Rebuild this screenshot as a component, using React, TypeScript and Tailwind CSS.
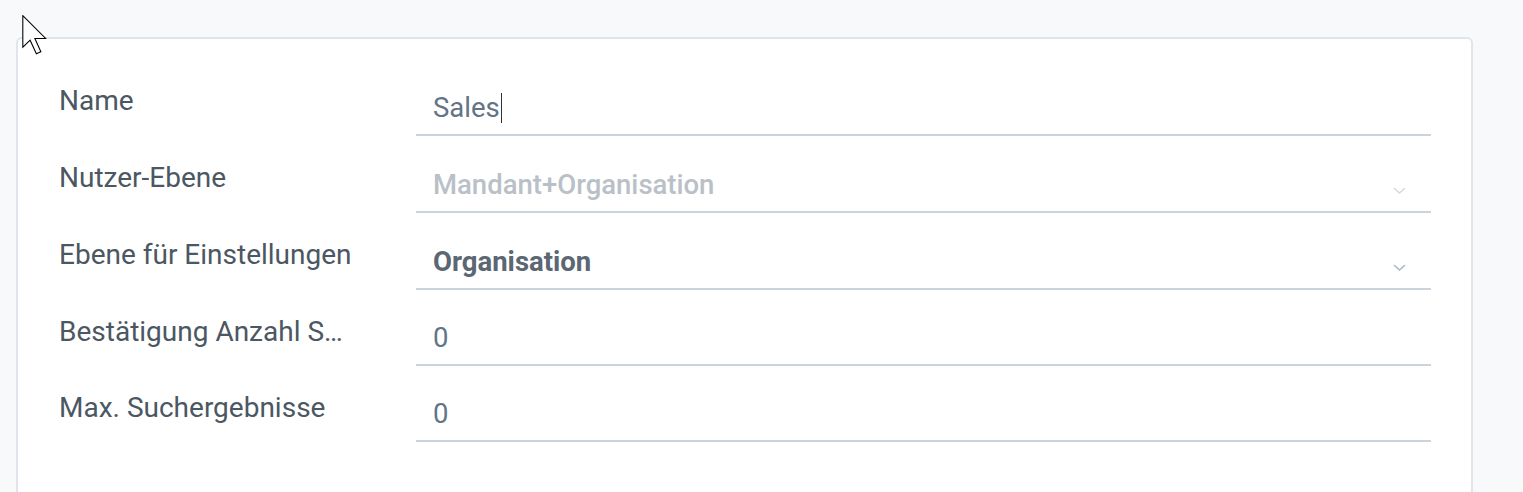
import React from 'react';

interface Field {
  label: string;
  value: string;
  kind: 'text' | 'disabled' | 'select';
  caret?: boolean;
  height: string;
}

const fields: Field[] = [
  { label: 'Name', value: 'Sales', kind: 'text', caret: true, height: 'h-[77px]' },
  { label: 'Nutzer-Ebene', value: 'Mandant+Organisation', kind: 'disabled', height: 'h-[77px]' },
  { label: 'Ebene für Einstellungen', value: 'Organisation', kind: 'select', height: 'h-[77px]' },
  { label: 'Bestätigung Anzahl Suchergebnisse', value: '0', kind: 'text', height: 'h-[76px]' },
  { label: 'Max. Suchergebnisse', value: '0', kind: 'text', height: 'h-[76px]' },
];

const Chevron: React.FC<{ light?: boolean }> = ({ light }) => (
  <svg width="13" height="8" viewBox="0 0 13 8" fill="none" className="shrink-0">
    <path
      d="M1.5 1.5 L6.5 6 L11.5 1.5"
      stroke={light ? '#d3dae0' : '#a9b7c3'}
      strokeWidth="1.6"
      strokeLinecap="round"
      strokeLinejoin="round"
    />
  </svg>
);

const Cursor: React.FC = () => (
  <svg
    width="27"
    height="40"
    viewBox="0 0 12.4 18.6"
    className="absolute left-[22px] top-[15px] pointer-events-none"
  >
    <path
      d="M0.3 0.3 L0.3 15 L3.7 11.7 L6.6 18 L8.7 17.1 L5.9 10.9 L10.9 10.9 Z"
      fill="#ffffff"
      stroke="#000000"
      strokeWidth="0.5"
      strokeLinejoin="miter"
    />
  </svg>
);

const Row: React.FC<{ field: Field }> = ({ field }) => {
  const valueClass =
    field.kind === 'disabled'
      ? 'text-[#b9c0c7] font-medium'
      : field.kind === 'select'
      ? 'text-[#5b6773] font-bold'
      : 'text-[#627485]';

  return (
    <div className={`flex ${field.height}`}>
      <div className="w-[357px] shrink-0 pt-[26px] pr-[62px]">
        <div className="text-[28px] leading-[32px] text-[#4b5762] truncate">{field.label}</div>
      </div>
      <div className="flex-1 min-w-0 flex items-end border-b-2 border-[#cbd4dc] pb-[9px] pl-[17px] pr-[25px]">
        <div className={`flex-1 flex items-center text-[27.5px] leading-[34px] ${valueClass}`}>
          {field.value}
          {field.caret && <span className="inline-block w-[1.5px] h-[30px] bg-[#333] ml-[1px]" />}
        </div>
        {field.kind !== 'text' && (
          <div className="pb-[7px]">
            <Chevron light={field.kind === 'disabled'} />
          </div>
        )}
      </div>
    </div>
  );
};

const App: React.FC = () => {
  return (
    <div
      className="relative min-h-screen bg-[#f8f9fb] pt-[37px] pl-[16px] pr-[50px] overflow-hidden"
      style={{ fontFamily: 'Roboto, "Noto Sans", sans-serif' }}
    >
      <div className="h-[480px] bg-white border-2 border-[#dfe5eb] rounded-t-[6px] pl-[41px] pr-[40px] pt-[20px]">
        {fields.map((f) => (
          <Row key={f.label} field={f} />
        ))}
      </div>
      <Cursor />
    </div>
  );
};

export default App;
